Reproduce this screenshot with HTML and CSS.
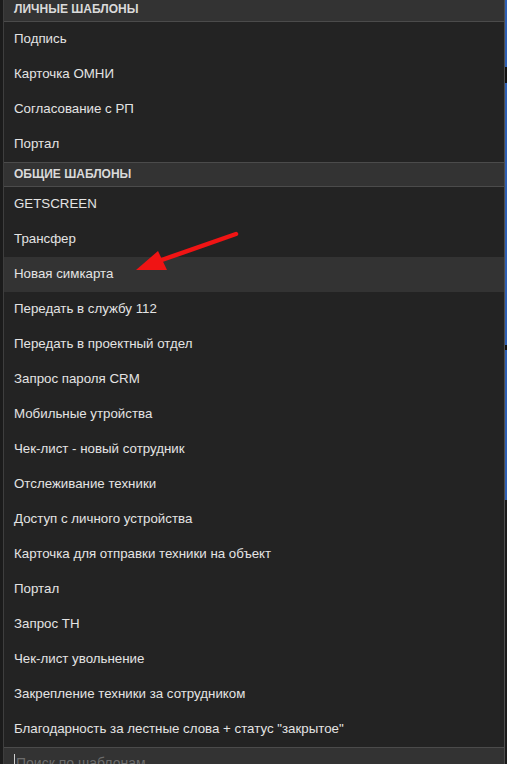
FILE: index.html
```html
<!DOCTYPE html>
<html lang="ru">
<head>
  <meta charset="UTF-8" />
  <title>Шаблоны</title>
  <link rel="stylesheet" href="styles.css">
</head>
<body>
  <div class="screen">
    <div class="gutter"></div>

    <div class="panel">
      <div class="group-title first">Личные шаблоны</div>
      <ul class="tpl-list">
        <li>Подпись</li>
        <li>Карточка ОМНИ</li>
        <li>Согласование с РП</li>
        <li>Портал</li>
      </ul>

      <div class="group-title">Общие шаблоны</div>
      <ul class="tpl-list">
        <li>GETSCREEN</li>
        <li>Трансфер</li>
        <li class="active">Новая симкарта</li>
        <li>Передать в службу 112</li>
        <li>Передать в проектный отдел</li>
        <li>Запрос пароля CRM</li>
        <li>Мобильные утройства</li>
        <li>Чек-лист - новый сотрудник</li>
        <li>Отслеживание техники</li>
        <li>Доступ с личного устройства</li>
        <li>Карточка для отправки техники на объект</li>
        <li>Портал</li>
        <li>Запрос ТН</li>
        <li>Чек-лист увольнение</li>
        <li>Закрепление техники за сотрудником</li>
        <li>Благодарность за лестные слова + статус "закрытое"</li>
      </ul>

      <div class="search">
        <span class="caret"></span>
        <input type="text" placeholder="Поиск по шаблонам">
      </div>

      <!-- pointer arrow drawn over the list -->
      <svg class="pointer" width="507" height="300" viewBox="0 0 507 300">
        <line x1="236" y1="234" x2="156" y2="262" stroke="#f01414" stroke-width="4.5" stroke-linecap="round" />
        <polygon points="136,270 158,251 167,270" fill="#f01414" />
      </svg>
    </div>

    <div class="page-edge"></div>
  </div>
</body>
</html>
```

FILE: styles.css
```css
html, body {
  margin: 0;
  padding: 0;
  background: #1c1c1c;
  overflow: hidden;
}

.screen {
  display: flex;
  width: 507px;
  height: 764px;
  overflow: hidden;
  font-family: "Liberation Sans", Arial, sans-serif;
}

.gutter {
  width: 3px;
  background: #1b1b1b;
}

.panel {
  position: relative;
  flex: 1;
  display: flex;
  flex-direction: column;
  background: #232323;
  border-left: 1px solid #3e3e3e;
  border-right: 1px solid #4e4e4e;
}

.group-title {
  flex-shrink: 0;
  height: 23px;
  line-height: 22px;
  padding-left: 10px;
  background: #333;
  border-top: 1px solid #4b4b4b;
  border-bottom: 1px solid #4b4b4b;
  color: #dadada;
  font-size: 12px;
  font-weight: bold;
  text-transform: uppercase;
}

.group-title.first {
  margin-top: -3px;
}

.tpl-list {
  flex-shrink: 0;
  list-style: none;
  margin: 0;
  padding: 0;
}

.tpl-list li {
  height: 33px;
  line-height: 33px;
  padding: 0 0 2px 10px;
  color: #e4e4e4;
  font-size: 13.3px;
  white-space: nowrap;
}

.tpl-list li.active {
  background: #333;
}

.search {
  display: flex;
  align-items: flex-start;
  flex: 1 0 auto;
  padding: 6px 0 0 10px;
  background: #333;
  border-top: 1px solid #4b4b4b;
}

.caret {
  width: 1px;
  height: 20px;
  background: #cfcfcf;
}

.search input {
  flex: 1;
  margin: 0;
  padding: 0 0 0 1px;
  border: none;
  outline: none;
  background: transparent;
  color: #ddd;
  font-family: "Liberation Sans", Arial, sans-serif;
  font-size: 14px;
  line-height: 18px;
}

.search input::placeholder {
  color: #6c6c6c;
}

.pointer {
  position: absolute;
  left: -4px;
  top: 0;
  pointer-events: none;
}

.page-edge {
  width: 2px;
  background: linear-gradient(to bottom,
    #2d5fb4 0, #2d5fb4 67px, #111 67px, #111 83px,
    #2d5fb4 83px, #2d5fb4 345px, #111 345px, #111 350px,
    #2d5fb4 350px, #2d5fb4 500px, #1a1a1a 500px, #1a1a1a 760px);
}
```
